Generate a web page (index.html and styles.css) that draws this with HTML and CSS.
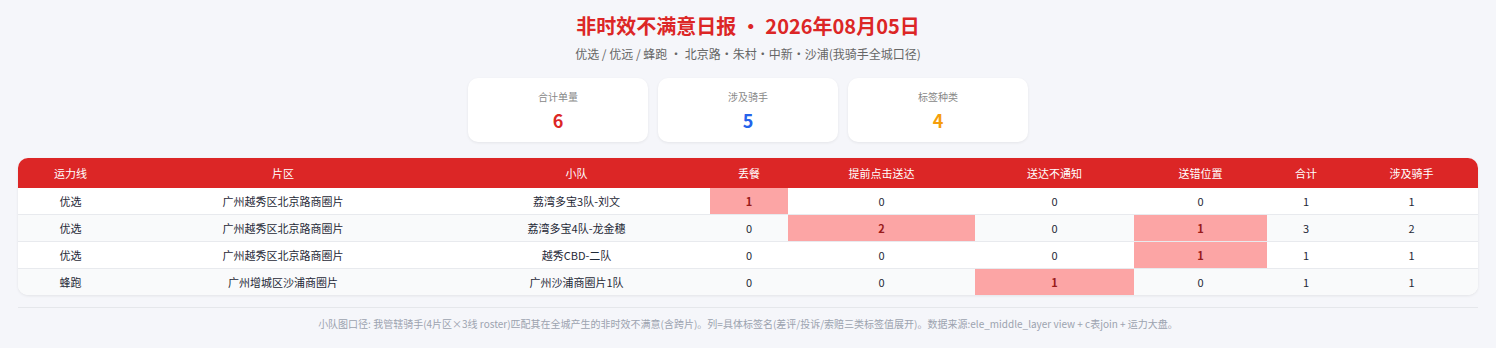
FILE: index.html
```html
<!DOCTYPE html>
<html lang="zh-CN">
<head>
<meta charset="utf-8">
<title>非时效不满意日报</title>
<link rel="stylesheet" href="styles.css">
</head>
<body>
<div class="page">
  <header class="head">
    <h1 class="title">非时效不满意日报 · 2026年08月05日</h1>
    <p class="sub">优选 / 优远 / 蜂跑 · 北京路・朱村・中新・沙浦(我骑手全城口径)</p>
  </header>
  <section class="cards">
    <div class="card"><div class="card-label">合计单量</div><div class="card-num red">6</div></div>
    <div class="card"><div class="card-label">涉及骑手</div><div class="card-num blue">5</div></div>
    <div class="card"><div class="card-label">标签种类</div><div class="card-num orange">4</div></div>
  </section>
  <div class="table-wrap">
    <table class="grid">
      <colgroup>
        <col class="c-line"><col class="c-area"><col class="c-team"><col class="c-lost"><col class="c-early"><col class="c-notify"><col class="c-wrong"><col class="c-total"><col class="c-rider">
      </colgroup>
      <thead>
        <tr><th>运力线</th><th>片区</th><th>小队</th><th>丢餐</th><th>提前点击送达</th><th>送达不通知</th><th>送错位置</th><th>合计</th><th>涉及骑手</th></tr>
      </thead>
      <tbody>
        <tr><td>优选</td><td>广州越秀区北京路商圈片</td><td>荔湾多宝3队-刘文</td><td class="hot">1</td><td>0</td><td>0</td><td>0</td><td>1</td><td>1</td></tr>
        <tr><td>优选</td><td>广州越秀区北京路商圈片</td><td>荔湾多宝4队-龙金穗</td><td>0</td><td class="hot">2</td><td>0</td><td class="hot">1</td><td>3</td><td>2</td></tr>
        <tr><td>优选</td><td>广州越秀区北京路商圈片</td><td>越秀CBD-二队</td><td>0</td><td>0</td><td>0</td><td class="hot">1</td><td>1</td><td>1</td></tr>
        <tr><td>蜂跑</td><td>广州增城区沙浦商圈片</td><td>广州沙浦商圈片1队</td><td>0</td><td>0</td><td class="hot">1</td><td>0</td><td>1</td><td>1</td></tr>
      </tbody>
    </table>
  </div>
  <footer class="foot">小队图口径: 我管辖骑手(4片区×3线 roster)匹配其在全城产生的非时效不满意(含跨片)。列=具体标签名(差评/投诉/索赔三类标签值展开)。数据来源:ele_middle_layer view + c表join + 运力大盘。</footer>
</div>
</body>
</html>
```

FILE: styles.css
```css
* { box-sizing: border-box; }
html, body { margin: 0; padding: 0; }
body {
  background: #f5f6fa;
  font-family: "Noto Sans CJK SC", "Noto Sans", sans-serif;
  color: #1f2937;
}
.page { padding: 12px 18px 0; }
.head { text-align: center; }
.title {
  margin: 0;
  font-size: 20px;
  line-height: 28px;
  font-weight: 700;
  color: #dc2626;
}
.sub {
  margin: 4px 0 0;
  font-size: 12px;
  line-height: 20px;
  color: #666;
}
.cards {
  display: flex;
  justify-content: center;
  gap: 10px;
  margin-top: 14px;
}
.card {
  width: 180px;
  height: 64px;
  background: #fff;
  border-radius: 10px;
  box-shadow: 0 1px 3px rgba(0,0,0,0.07);
  text-align: center;
  padding-top: 11px;
}
.card-label { font-size: 10px; line-height: 16px; color: #888; }
.card-num { font-size: 18px; line-height: 24px; font-weight: 700; margin-top: 3px; }
.red { color: #dc2626; }
.blue { color: #2563eb; }
.orange { color: #f59e0b; }
.table-wrap {
  margin-top: 16px;
  background: #fff;
  border-radius: 10px;
  overflow: hidden;
  box-shadow: 0 1px 3px rgba(0,0,0,0.08);
}
.grid {
  width: 100%;
  border-collapse: collapse;
  table-layout: fixed;
  font-size: 11px;
}
.c-line { width: 105px; }
.c-area { width: 320px; }
.c-team { width: 267px; }
.c-lost { width: 78px; }
.c-early { width: 187px; }
.c-notify { width: 159px; }
.c-wrong { width: 133px; }
.c-total { width: 78px; }
.c-rider { width: 133px; }
.grid th {
  background: #dc2626;
  color: #fff;
  font-weight: 400;
  height: 30px;
  padding: 0;
  text-align: center;
}
.grid td {
  height: 27px;
  padding: 0;
  text-align: center;
  color: #1f2937;
  border-top: 1px solid #e8eaee;
}
.grid tbody tr:first-child td { border-top: none; height: 26px; }
.grid tbody tr:nth-child(even) td { background: #f9fafb; }
.grid td.hot,
.grid tbody tr:nth-child(even) td.hot {
  background: #fca5a5;
  color: #991b1b;
  font-weight: 700;
}
.foot {
  margin-top: 12px;
  border-top: 1px solid #e5e7eb;
  padding-top: 8px;
  text-align: center;
  font-size: 10px;
  line-height: 16px;
  color: #9ca3af;
}
```
